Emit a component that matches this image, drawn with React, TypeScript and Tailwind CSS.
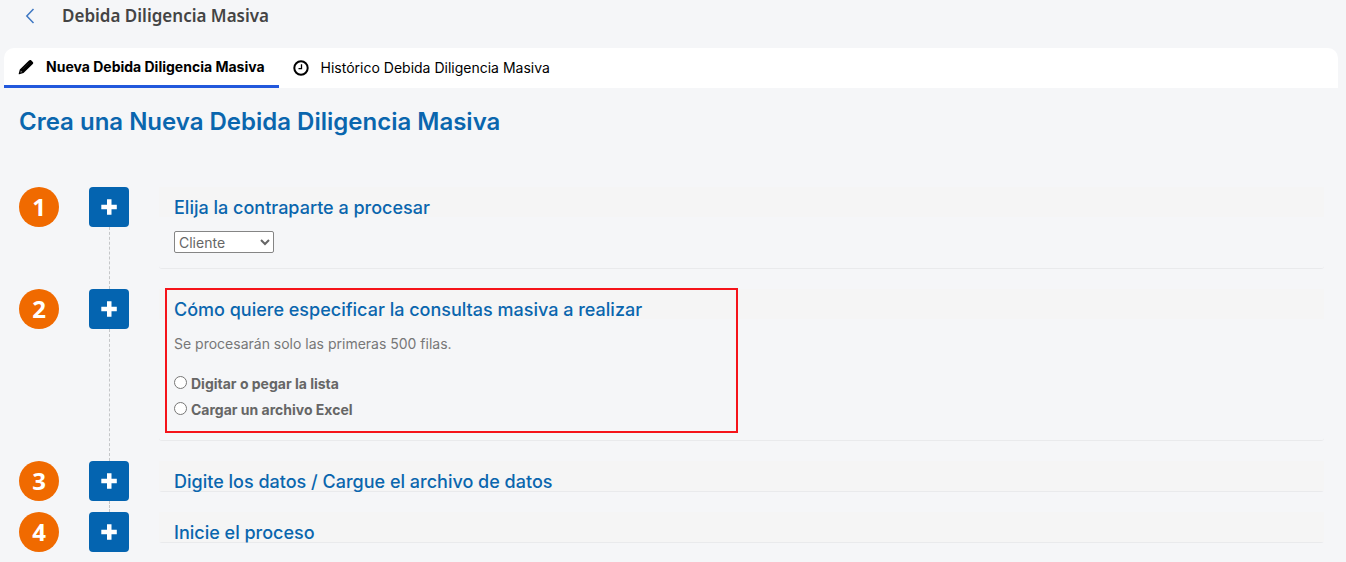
import { useState } from "react";
import type { ReactNode } from "react";
import clsx from "clsx";

type StepProps = {
  number: number;
  title: string;
  last?: boolean;
  highlighted?: boolean;
  children?: ReactNode;
};

const PencilIcon = () => (
  <svg viewBox="0 0 16 16" className="size-4" fill="currentColor" aria-hidden="true">
    <path d="M11 1.400c.6-.6 1.500-.7 2.100-.1l1.700 1.700c.6.6.6 1.500 0 2.100L5.500 14 1.300 15.300c-.4.100-.7-.2-.6-.6L1.800 10.400z" />
    <path d="M2.800 11.600 4.300 13 2.400 13.700z" fill="#fff" opacity=".5" />
    <path d="M10.600 4.200 4.800 10" stroke="#fff" strokeWidth=".4" opacity=".3" />
  </svg>
);

const ClockIcon = () => (
  <svg viewBox="0 0 16 16" className="size-4" fill="none" stroke="currentColor" aria-hidden="true">
    <circle cx="8" cy="8" r="6.700" strokeWidth="2" />
    <path d="M8.500 4.300V8.600H5.500" strokeWidth="1.300" />
  </svg>
);

const PlusIcon = () => (
  <svg viewBox="0 0 16 16" className="size-4" fill="currentColor" aria-hidden="true">
    <path d="M6.300.3h3.900c.2 0 .3.1.3.3v5.200h5c.2 0 .3.1.3.3v3.800c0 .2-.1.3-.3.3h-5v5.200c0 .2-.1.300-.3.300H6.300c-.2 0-.3-.1-.3-.3v-5.200H.6c-.2 0-.3-.1-.3-.3V6.100c0-.2.1-.3.3-.3H6V.6c0-.2.1-.3.3-.3z" />
  </svg>
);

const Step = ({ number, title, last, highlighted, children }: StepProps) => (
  <li className="flex gap-[30px]">
    <span className="flex size-10 shrink-0 items-center justify-center rounded-full bg-[#f06a00] font-['Open_Sans',sans-serif] text-2xl font-bold text-white">
      {number}
    </span>
    <div className="flex w-10 shrink-0 flex-col items-center">
      <button
        type="button"
        aria-label={`Abrir paso ${number}`}
        className="flex size-10 shrink-0 items-center justify-center rounded-[4px] bg-[#0464b0] text-white"
      >
        <PlusIcon />
      </button>
      {!last && <div className="w-px grow border-l border-dashed border-[#c4c6c8]" />}
    </div>
    <div className="min-w-0 grow pb-5">
      <section className="relative rounded-[3px] border-b border-[#e9eaec]">
        <div className="h-[30px] bg-[#f5f5f5] px-[15px] pt-[9px]">
          <h3 className="text-lg leading-6 font-medium text-[#0a66ae]">{title}</h3>
        </div>
        {children && <div className="px-[15px]">{children}</div>}
        {highlighted && (
          <div className="pointer-events-none absolute -top-px bottom-[7px] left-1.5 w-[573px] max-w-full border-2 border-[#f5141a]" />
        )}
      </section>
    </div>
  </li>
);

const tabs = [
  { id: "new", label: "Nueva Debida Diligencia Masiva", icon: <PencilIcon /> },
  { id: "history", label: "Histórico Debida Diligencia Masiva", icon: <ClockIcon /> },
];

const sources = [
  { id: "list", label: "Digitar o pegar la lista" },
  { id: "excel", label: "Cargar un archivo Excel" },
];

const App = () => {
  const [activeTab, setActiveTab] = useState("new");
  const [source, setSource] = useState("");

  return (
    <div className="min-h-screen bg-[#f5f6f8] font-['Inter',sans-serif] text-[#666]">
      <header className="flex h-12 items-start">
        <button type="button" aria-label="Volver" className="ml-5 flex h-8 w-5 items-center justify-center text-[#3f78c3]">
          <svg viewBox="0 0 10 16" className="h-4 w-2.5" fill="none" stroke="currentColor" strokeWidth="1.500" aria-hidden="true">
            <path d="M8.500 1 1.800 8l6.700 7" />
          </svg>
        </button>
        <h1 className="ml-[22px] font-['Noto_Sans',sans-serif] text-[17px] leading-8 font-semibold text-[#444]">
          Debida Diligencia Masiva
        </h1>
      </header>

      <nav className="mr-2 ml-1 flex h-10 rounded-t-[10px] bg-white">
        {tabs.map((tab) => (
          <button
            key={tab.id}
            type="button"
            onClick={() => setActiveTab(tab.id)}
            className={clsx(
              "flex items-center gap-3 px-3.5 text-sm text-black",
              activeTab === tab.id ? "border-b-3 border-[#2258dc] font-bold" : "font-normal"
            )}
          >
            {tab.icon}
            {tab.label}
          </button>
        ))}
      </nav>

      <main className="pt-4 pr-[22px] pl-[19px]">
        <h2 className="text-2xl leading-9 font-semibold text-[#0a66ae]">Crea una Nueva Debida Diligencia Masiva</h2>

        <ol className="mt-[47px]">
          <Step number={1} title="Elija la contraparte a procesar">
            <div className="h-[51px] pt-3.5">
              <select
                aria-label="Contraparte"
                defaultValue="Cliente"
                className="block h-[22px] w-[100px] rounded-[2px] border border-[#858585] bg-white text-sm leading-5 text-[#666]"
              >
                <option>Cliente</option>
                <option>Proveedor</option>
                <option>Empleado</option>
              </select>
            </div>
          </Step>
          <Step number={2} title="Cómo quiere especificar la consultas masiva a realizar" highlighted>
            <div className="h-[121px] pt-[15px]">
              <p className="text-sm leading-5 text-[#777]">Se procesarán solo las primeras 500 filas.</p>
              <fieldset className="mt-[17px]">
                {sources.map((item) => (
                  <label key={item.id} className="flex h-[26px] items-center gap-1 text-sm font-bold">
                    <input
                      type="radio"
                      name="source"
                      value={item.id}
                      checked={source === item.id}
                      onChange={() => setSource(item.id)}
                      className="mb-1 size-[13px]"
                    />
                    {item.label}
                  </label>
                ))}
              </fieldset>
            </div>
          </Step>
          <Step number={3} title="Digite los datos / Cargue el archivo de datos" />
          <Step number={4} title="Inicie el proceso" last />
        </ol>
      </main>
    </div>
  );
};

export default App;
